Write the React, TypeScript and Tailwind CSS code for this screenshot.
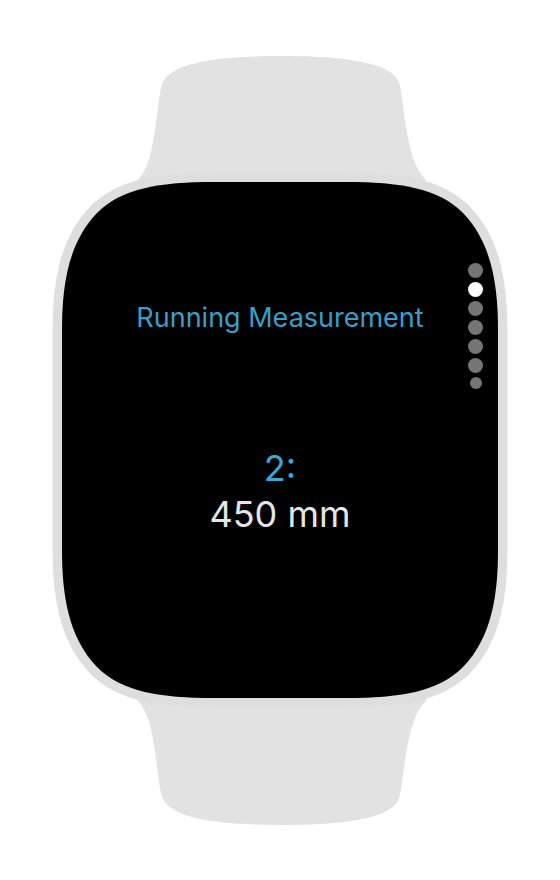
import clsx from "clsx";

const pages = [0, 1, 2, 3, 4, 5, 6];
const currentPage = 1;

const strap =
  "M138 180 C146 171 150 158 152 147 C157 121 158 102 161 88 C163 78 170 72 184 66.500 C204 59 240 56 281.500 56 C323 56 359 59 379 66.500 C391 71 398 77 400 86 C403 101 404 121 410 147 C413 159 417 171 426 180 L426 200 L138 200 Z";

const WatchFrame = () => (
  <svg
    viewBox="52 56 456 769"
    className="col-start-1 row-start-1 block w-full"
    aria-hidden="true"
  >
    <path d={strap} fill="#e2e2e2" />
    <path d={strap} fill="#e2e2e2" transform="matrix(1 0 0 -1 0 881)" />
    {/* case and screen, the stroke is the bezel */}
    <path
      d="M62 330 C62 286 68 243 97 213 C122 188 160 182 214 182 L346 182 C400 182 438 188 463 213 C492 243 498 286 498 330 L498 550 C498 594 492 637 463 667 C438 692 400 698 346 698 L214 698 C160 698 122 692 97 667 C68 637 62 594 62 550 Z"
      fill="#000"
      stroke="#dedede"
      strokeWidth="19"
      paintOrder="stroke"
    />
  </svg>
);

const PageDots = () => (
  <div className="absolute top-[207px] right-[25px] flex flex-col items-center gap-1">
    {pages.map((page) => (
      <span
        key={page}
        className={clsx(
          "rounded-full",
          page === pages.length - 1 ? "size-3" : "size-[15px]",
          page === currentPage ? "bg-white" : "bg-[#757575]"
        )}
      />
    ))}
  </div>
);

const App = () => {
  return (
    <main className="min-h-screen bg-white px-[52px] py-14 font-['Inter',sans-serif]">
      <div className="relative mx-auto grid max-w-[456px]">
        <WatchFrame />
        <section className="col-start-1 row-start-1 flex flex-col items-center pt-[244px] text-center">
          <h1 className="text-[27px] leading-9 text-[#3a9fc8]">
            Running Measurement
          </h1>
          <div className="mt-[109px] text-[36px] leading-[46px]">
            <p className="text-[#3aa7d6]">2:</p>
            <p className="text-[#e5e5e5]">450 mm</p>
          </div>
        </section>
        <PageDots />
      </div>
    </main>
  );
};
export default App;
